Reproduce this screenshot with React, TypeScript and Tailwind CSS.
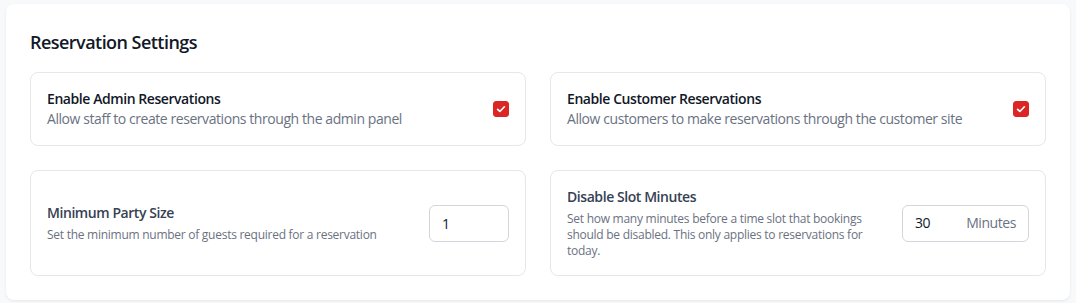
import React, { useState } from "react";

const font = { fontFamily: '"Open Sans", "Noto Sans", sans-serif' };

function RedCheck({ checked, onChange }: { checked: boolean; onChange: () => void }) {
  return (
    <button
      type="button"
      onClick={onChange}
      className={`${checked ? "bg-[#dc2626] border-[#dc2626]" : "bg-white border-gray-300"} w-4 h-4 rounded-[3px] border flex items-center justify-center shrink-0`}
    >
      {checked && (
        <svg viewBox="0 0 16 16" className="w-3 h-3" fill="none">
          <path d="M3.5 8.5l3 2.8 6-6.3" stroke="white" strokeWidth="2.2" strokeLinecap="round" strokeLinejoin="round" />
        </svg>
      )}
    </button>
  );
}

export default function App() {
  const [admin, setAdmin] = useState(true);
  const [customer, setCustomer] = useState(true);
  const [party, setParty] = useState("1");
  const [slot, setSlot] = useState("30");

  return (
    <div className="min-h-screen bg-[#f8f9fb] px-[6px] pt-1 tracking-[-0.027em]" style={font}>
      <div className="bg-white rounded-lg shadow-[0_1px_3px_rgba(0,0,0,0.08)] px-6 pt-6 pb-6">
        <h2 className="text-[18px] font-semibold text-[#111827] leading-7 mb-4 tracking-[-0.03em]">Reservation Settings</h2>
        <div className="grid grid-cols-2 gap-6">
          <div className="border border-gray-200 rounded-lg p-4 flex items-center justify-between">
            <div>
              <p className="text-sm font-semibold text-[#111827] leading-5">Enable Admin Reservations</p>
              <p className="text-sm text-gray-500 leading-5">Allow staff to create reservations through the admin panel</p>
            </div>
            <RedCheck checked={admin} onChange={() => setAdmin(!admin)} />
          </div>
          <div className="border border-gray-200 rounded-lg p-4 flex items-center justify-between">
            <div>
              <p className="text-sm font-semibold text-[#111827] leading-5">Enable Customer Reservations</p>
              <p className="text-sm text-gray-500 leading-5">Allow customers to make reservations through the customer site</p>
            </div>
            <RedCheck checked={customer} onChange={() => setCustomer(!customer)} />
          </div>
          <div className="border border-gray-200 rounded-lg p-4 flex items-center justify-between">
            <div>
              <p className="text-sm font-semibold text-gray-700 leading-5">Minimum Party Size</p>
              <p className="text-xs text-gray-500 leading-4 mt-1 tracking-[-0.022em]">Set the minimum number of guests required for a reservation</p>
            </div>
            <input
              type="number"
              value={party}
              onChange={(e) => setParty(e.target.value)}
              className="w-20 h-[37px] border border-gray-300 rounded-md px-3 text-sm text-gray-900 outline-none"
            />
          </div>
          <div className="border border-gray-200 rounded-lg p-4 flex items-center justify-between">
            <div className="max-w-xs">
              <p className="text-sm font-semibold text-gray-700 leading-5">Disable Slot Minutes</p>
              <p className="text-xs text-gray-500 leading-4 mt-1 tracking-[-0.022em]">
                Set how many minutes before a time slot that bookings should be disabled. This only applies to reservations for today.
              </p>
            </div>
            <div className="w-[127px] h-[37px] border border-gray-300 rounded-md flex items-center px-3">
              <input
                type="number"
                value={slot}
                onChange={(e) => setSlot(e.target.value)}
                className="w-full text-sm text-gray-900 outline-none"
              />
              <span className="text-sm text-gray-500">Minutes</span>
            </div>
          </div>
        </div>
      </div>
    </div>
  );
}
